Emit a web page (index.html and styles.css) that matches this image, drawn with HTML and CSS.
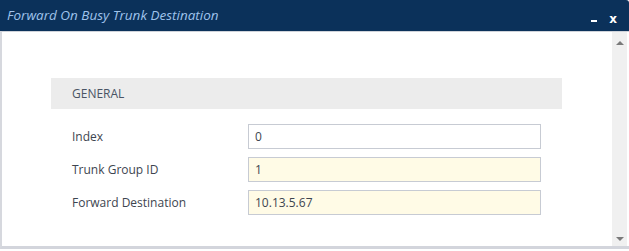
FILE: index.html
```html
<!DOCTYPE html>
<html lang="en">
<head>
  <meta charset="UTF-8" />
  <title>Forward On Busy Trunk Destination</title>
  <link rel="stylesheet" href="styles.css">
</head>
<body>

<div class="dialog">
  <div class="title-bar">
    <span class="title">Forward On Busy Trunk Destination</span>
    <div class="title-actions">
      <span class="btn-min"></span>
      <span class="btn-close">x</span>
    </div>
  </div>

  <div class="dialog-body">
    <div class="content">
      <div class="section-head">GENERAL</div>

      <div class="form-row">
        <label for="f-index">Index</label>
        <input type="text" id="f-index" value="0" />
      </div>
      <div class="form-row">
        <label for="f-trunk">Trunk Group ID</label>
        <input type="text" id="f-trunk" class="edited" value="1" />
      </div>
      <div class="form-row">
        <label for="f-dest">Forward Destination</label>
        <input type="text" id="f-dest" class="edited" value="10.13.5.67" />
      </div>
    </div>

    <div class="scrollbar">
      <span class="arrow-up"></span>
      <span class="arrow-down"></span>
    </div>
  </div>
</div>

</body>
</html>
```

FILE: styles.css
```css
body {
  margin: 0;
  background: white;
  font-family: 'Open Sans', 'Noto Sans', sans-serif;
}
.dialog {
  width: 629px;
}
.title-bar {
  height: 31px;
  background: #0b315a;
  border-top-right-radius: 3px;
  display: flex;
  align-items: center;
  justify-content: space-between;
  padding: 0 12px 0 7px;
}
.title {
  font-style: italic;
  font-size: 13.5px;
  color: #9fc3ec;
  margin-top: -2px;
}
.title-actions {
  display: flex;
  align-items: center;
  gap: 12px;
  margin-top: 6px;
}
.btn-min {
  width: 6px;
  height: 2px;
  background: white;
  margin-top: 5px;
}
.btn-close {
  color: white;
  font-weight: 700;
  font-size: 12px;
  line-height: 12px;
  font-family: 'DejaVu Sans', sans-serif;
}
.dialog-body {
  height: 214px;
  border-top: 1px solid #cfd3da;
  border-left: 2px solid #d6d8de;
  border-bottom: 3px solid #d3d5dc;
  display: flex;
}
.content {
  flex: 1;
  padding: 46px 0 0 49px;
}
.section-head {
  width: 490px;
  height: 31px;
  line-height: 31px;
  background: #ececec;
  padding-left: 21px;
  font-size: 12px;
  color: #4a5464;
  margin-bottom: 15px;
}
.form-row {
  display: flex;
  align-items: center;
  margin-bottom: 8px;
}
.form-row label {
  width: 176px;
  padding-left: 21px;
  font-size: 12px;
  color: #3d4550;
}
.form-row input {
  width: 285px;
  height: 23px;
  padding: 0 0 0 6px;
  border: 1px solid #c7cbd3;
  background: white;
  font-family: 'Open Sans', 'Noto Sans', sans-serif;
  font-size: 12px;
  color: #3d4550;
  box-sizing: content-box;
  outline: none;
}
.form-row input.edited {
  background: #fffbe6;
}
.scrollbar {
  width: 15px;
  margin-right: 2px;
  background: #f0f0f0;
  display: flex;
  flex-direction: column;
  justify-content: space-between;
  align-items: center;
  padding: 9px 0 5px;
}
.arrow-up {
  width: 0;
  height: 0;
  border-left: 4px solid transparent;
  border-right: 4px solid transparent;
  border-bottom: 4px solid #7a7a7a;
}
.arrow-down {
  width: 0;
  height: 0;
  border-left: 4px solid transparent;
  border-right: 4px solid transparent;
  border-top: 4px solid #7a7a7a;
}
```
